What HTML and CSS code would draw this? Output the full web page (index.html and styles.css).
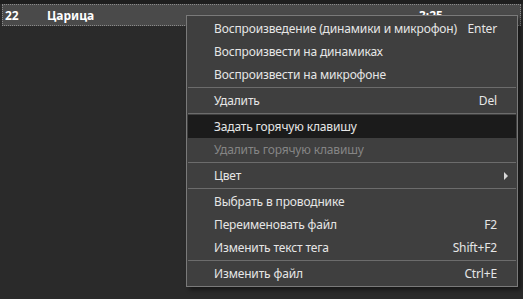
FILE: index.html
```html
<!DOCTYPE html>
<html lang="ru">
<head>
    <meta charset="UTF-8">
    <title>Список звуков</title>
    <link rel="stylesheet" href="styles.css">
</head>
<body>
    <div class="top-strip"></div>
    <div class="track-row">
        <span class="num">22</span>
        <span class="name">Царица</span>
        <span class="time">3:25</span>
    </div>

    <ul class="menu">
        <li class="item"><span>Воспроизведение (динамики и микрофон)</span><span class="key">Enter</span></li>
        <li class="item"><span>Воспроизвести на динамиках</span></li>
        <li class="item"><span>Воспроизвести на микрофоне</span></li>
        <li class="sep"></li>
        <li class="item"><span>Удалить</span><span class="key">Del</span></li>
        <li class="sep"></li>
        <li class="item hover"><span>Задать горячую клавишу</span></li>
        <li class="item disabled"><span>Удалить горячую клавишу</span></li>
        <li class="sep"></li>
        <li class="item"><span>Цвет</span><span class="arrow"></span></li>
        <li class="sep"></li>
        <li class="item"><span>Выбрать в проводнике</span></li>
        <li class="item"><span>Переименовать файл</span><span class="key">F2</span></li>
        <li class="item"><span>Изменить текст тега</span><span class="key">Shift+F2</span></li>
        <li class="sep"></li>
        <li class="item"><span>Изменить файл</span><span class="key">Ctrl+E</span></li>
    </ul>
</body>
</html>
```

FILE: styles.css
```css
body {
    margin: 0;
    background-color: #2a2a2a;
    font-family: "Noto Sans", "Open Sans", sans-serif;
    height: 299px;
    position: relative;
    overflow: hidden;
}
.top-strip {
    height: 4px;
    background-color: #1e1e1e;
}
.track-row {
    display: flex;
    align-items: center;
    height: 20px;
    margin: 0 2px;
    background-color: #4a4a4a;
    border: 1px dotted #8a8a8a;
    color: #ffffff;
    font-weight: bold;
    font-size: 12px;
}
.num {
    width: 42px;
    padding-left: 2px;
}
.name {
    width: 372px;
}
.menu {
    position: absolute;
    left: 186px;
    top: 15px;
    width: 328px;
    margin: 0;
    padding: 1px;
    list-style: none;
    background-color: #3f3f3f;
    border: 1px solid #7a7a7a;
    box-shadow: 3px 3px 4px rgba(0, 0, 0, 0.45);
    color: #e6e6e6;
    font-size: 12px;
    letter-spacing: -0.15px;
}
.item {
    display: flex;
    justify-content: space-between;
    align-items: center;
    height: 23px;
    padding: 0 19px 0 26px;
}
.item.hover {
    background-color: #1b1b1b;
}
.item.disabled {
    color: #858585;
}
.sep {
    height: 1px;
    margin: 1px 0;
    background-color: #6c6c6c;
}
.arrow {
    width: 0;
    height: 0;
    margin-right: -11px;
    border-top: 4px solid transparent;
    border-bottom: 4px solid transparent;
    border-left: 4px solid #d8d8d8;
}
```
